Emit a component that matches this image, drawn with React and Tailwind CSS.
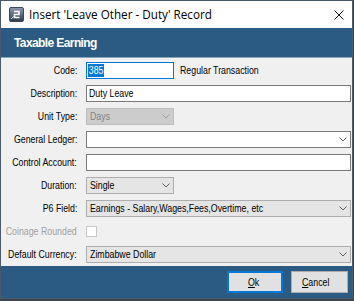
import React from 'react'

const font = "font-['Liberation_Sans',Arial,sans-serif]"

// texts in the shot are drawn narrower than Arial, so squeeze them a bit
const T = ({ children, right, className = '' }) => (
  <span
    className={`inline-block shrink-0 whitespace-nowrap scale-x-[0.8] ${right ? 'origin-right' : 'origin-left'} ${className}`}
  >
    {children}
  </span>
)

const Chevron = ({ color = '#606060' }) => (
  <svg width="8" height="5" viewBox="0 0 8 5" className="shrink-0">
    <path d="M0.5 0.5 L4 4 L7.5 0.5" stroke={color} strokeWidth="1" fill="none" />
  </svg>
)

const Row = ({ label, dim, children }) => (
  <div className="flex h-[23px] items-center">
    <div className={`flex w-[76px] shrink-0 justify-end text-[11px] leading-none ${dim ? 'text-[#a0a0a0]' : 'text-black'}`}>
      <T right>{label}</T>
    </div>
    <div className="ml-[9px] flex flex-1 items-center pr-[1px]">{children}</div>
  </div>
)

const TextBox = ({ value, className = '' }) => (
  <div className={`flex h-[17px] items-center border border-[#7a7a7a] bg-white px-[2px] text-[11px] text-black ${className}`}>
    <T>{value}</T>
  </div>
)

const Combo = ({ value, className = '', disabled, editable }) => (
  <div
    className={`flex h-[17px] items-center border px-[3px] text-[11px] ${
      disabled
        ? 'border-[#bfbfbf] bg-[#cccccc] text-[#838383]'
        : editable
        ? 'border-[#7a7a7a] bg-white text-black'
        : 'border-[#adadad] bg-[#e5e5e5] text-black'
    } ${className}`}
  >
    <span className="min-w-0 flex-1">
      <T>{value}</T>
    </span>
    <Chevron color={disabled ? '#a0a0a0' : '#606060'} />
  </div>
)

const AppIcon = () => (
  <svg width="15" height="15" viewBox="0 0 15 15">
    <defs>
      <linearGradient id="ig" x1="0" y1="0" x2="0" y2="1">
        <stop offset="0" stopColor="#8a9bb0" />
        <stop offset="1" stopColor="#2c3a4c" />
      </linearGradient>
    </defs>
    <rect x="0.5" y="0.5" width="14" height="14" rx="1.5" fill="url(#ig)" stroke="#3a4a5c" />
    <path d="M5 4.5 H10 V7.5 H5.5 V10.5 H10.5" stroke="white" strokeWidth="1.6" fill="none" />
    <path d="M2 12 L6 8" stroke="#cfd8e3" strokeWidth="1" />
  </svg>
)

export default function App() {
  return (
    <div className={`h-[301px] w-[354px] overflow-hidden bg-[#3b4450] ${font}`}>
      <div className="flex h-[299px] w-[353px] flex-col border border-[#4b5a6a] bg-[#f0f0f0]">
        {/* title bar */}
        <div className="flex h-[27px] shrink-0 items-center bg-white pl-[8px] pr-[7px]">
          <AppIcon />
          <span className="ml-[5px] whitespace-nowrap font-['Open_Sans','Noto_Sans',sans-serif] text-[11.7px] text-black">
            Insert 'Leave Other - Duty' Record
          </span>
          <svg width="10" height="10" viewBox="0 0 10 10" className="ml-auto mr-[1px]">
            <path d="M0.5 0.5 L9.5 9.5 M9.5 0.5 L0.5 9.5" stroke="#111" strokeWidth="1" />
          </svg>
        </div>

        {/* header */}
        <div className="flex h-[29px] shrink-0 items-center bg-[#2b5b83] pl-[13px] text-[12px] font-bold tracking-[-0.6px] text-white">
          Taxable Earning
        </div>
        <div className="h-[1px] shrink-0 bg-[#8aa6bf]" />

        {/* form */}
        <div className="flex flex-col pt-[1px]">
          <Row label="Code:">
            <div className="flex h-[17px] w-[88px] items-center border border-[#0078d7] bg-white px-[1px] text-[11px]">
              <T className="bg-[#0078d7] px-[1px] leading-[13px] text-white">385</T>
            </div>
            <span className="ml-[6px] text-[11px] text-black">
              <T>Regular Transaction</T>
            </span>
          </Row>
          <Row label="Description:">
            <TextBox value="Duty Leave" className="flex-1" />
          </Row>
          <Row label="Unit Type:">
            <Combo value="Days" disabled className="w-[88px]" />
          </Row>
          <Row label="General Ledger:">
            <Combo value="" editable className="flex-1" />
          </Row>
          <Row label="Control Account:">
            <TextBox value="" className="flex-1" />
          </Row>
          <Row label="Duration:">
            <Combo value="Single" className="w-[88px]" />
          </Row>
          <Row label="P6 Field:">
            <Combo value="Earnings - Salary,Wages,Fees,Overtime, etc" className="flex-1" />
          </Row>
          <Row label="Coinage Rounded" dim>
            <div className="h-[11px] w-[11px] border border-[#c8c8c8] bg-white" />
          </Row>
          <Row label="Default Currency:">
            <Combo value="Zimbabwe Dollar" className="flex-1" />
          </Row>
        </div>

        {/* footer */}
        <div className="flex flex-1 items-center justify-end gap-[8px] bg-[#2b5b83] pr-[4px]">
          <button className="flex h-[22px] w-[56px] items-center justify-center border border-[#0078d7] bg-[#e1e1e1] text-[11px] text-black shadow-[inset_0_0_0_1px_#0078d7]">
            <T className="origin-center">
              <span className="underline">O</span>k
            </T>
          </button>
          <button className="flex h-[22px] w-[57px] items-center justify-center border border-[#adadad] bg-[#e1e1e1] text-[11px] text-black">
            <T className="origin-center">
              <span className="underline">C</span>ancel
            </T>
          </button>
        </div>
      </div>
    </div>
  )
}
